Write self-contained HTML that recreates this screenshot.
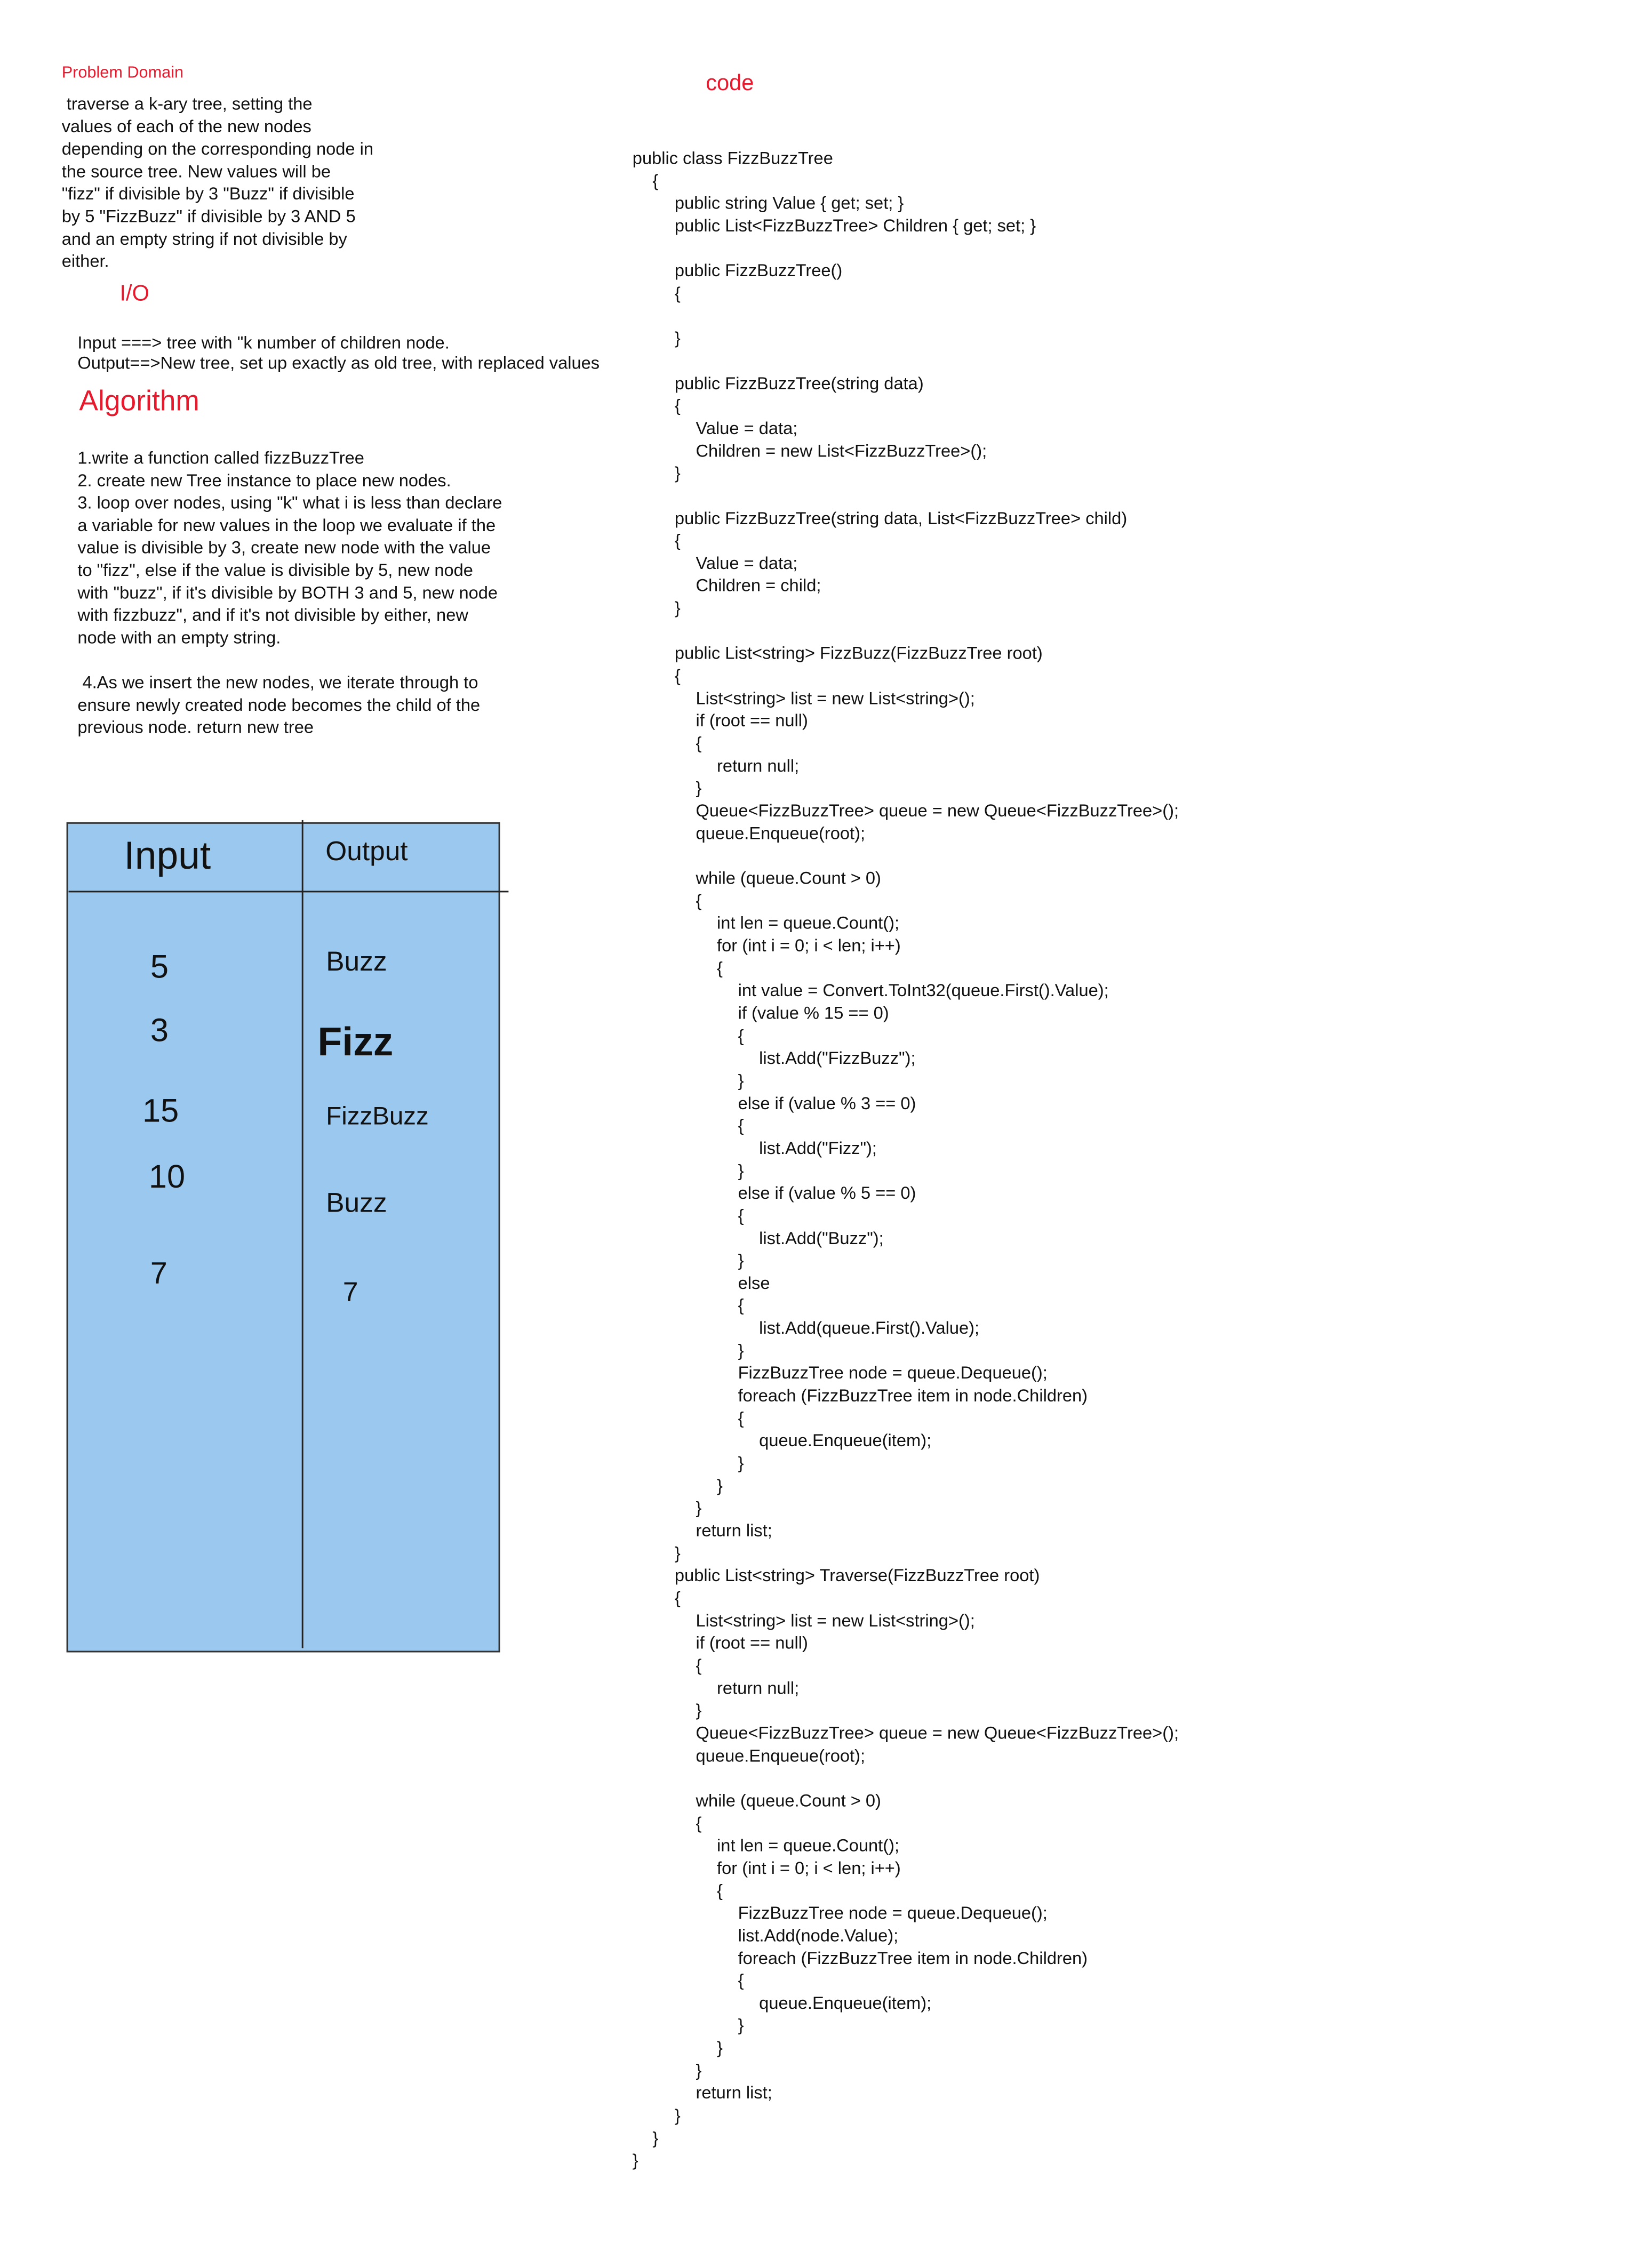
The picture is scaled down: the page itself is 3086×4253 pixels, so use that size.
<!DOCTYPE html>
<html><head><meta charset="utf-8"><style>
body{margin:0;width:3086px;height:4214px;background:#fff;position:relative;overflow:hidden;font-family:"Liberation Sans",sans-serif;color:#111}
#w{position:absolute;left:0;top:0;width:3140px;height:4300px;transform:scale(0.989);transform-origin:0 0}
.t{position:absolute;white-space:pre;line-height:1}
.red{color:#e8192c}
.p{position:absolute;left:117px;font-size:33px;line-height:42.6px;white-space:pre}
.code{position:absolute;left:1199px;top:279px;font-family:"Liberation Sans Narrow","Liberation Sans",sans-serif;font-size:33px;line-height:42.66px}
.code div{height:42.66px;white-space:pre}
</style></head><body><div id="w">
<div class="t red" style="left:117px;top:121px;font-size:31px">Problem Domain</div>
<div class="p" style="top:176px"> traverse a k-ary tree, setting the
values of each of the new nodes
depending on the corresponding node in
the source tree. New values will be
"fizz" if divisible by 3 "Buzz" if divisible
by 5 "FizzBuzz" if divisible by 3 AND 5
and an empty string if not divisible by
either.</div>
<div class="t red" style="left:227px;top:535px;font-size:42px">I/O</div>
<div class="p" style="left:147px;top:631px;line-height:38px;font-size:33px">Input ===&gt; tree with "k number of children node.
Output==&gt;New tree, set up exactly as old tree, with replaced values</div>
<div class="t red" style="left:150px;top:733px;font-size:54px">Algorithm</div>
<div class="p" style="left:147px;top:847px;font-size:33px">1.write a function called fizzBuzzTree
2. create new Tree instance to place new nodes.
3. loop over nodes, using "k" what i is less than declare
a variable for new values in the loop we evaluate if the
value is divisible by 3, create new node with the value
to "fizz", else if the value is divisible by 5, new node
with "buzz", if it's divisible by BOTH 3 and 5, new node
with fizzbuzz", and if it's not divisible by either, new
node with an empty string.

 4.As we insert the new nodes, we iterate through to
ensure newly created node becomes the child of the
previous node. return new tree</div>

<div style="position:absolute;left:126px;top:1559px;width:822px;height:1574px;background:#9ac8ee;border:3px solid #333;box-sizing:border-box"></div>
<div style="position:absolute;left:572px;top:1555px;width:3px;height:1570px;background:#222"></div>
<div style="position:absolute;left:130px;top:1689px;width:834px;height:3px;background:#222"></div>
<div class="t" style="left:235px;top:1585px;font-size:74px">Input</div>
<div class="t" style="left:617px;top:1588px;font-size:52px">Output</div>
<div class="t" style="left:285px;top:1803px;font-size:62px">5</div>
<div class="t" style="left:285px;top:1923px;font-size:62px">3</div>
<div class="t" style="left:270px;top:2076px;font-size:62px">15</div>
<div class="t" style="left:282px;top:2201px;font-size:62px">10</div>
<div class="t" style="left:285px;top:2386px;font-size:58px">7</div>
<div class="t" style="left:618px;top:1797px;font-size:52px">Buzz</div>
<div class="t" style="left:602px;top:1938px;font-size:76px;font-weight:bold">Fizz</div>
<div class="t" style="left:618px;top:2093px;font-size:48px">FizzBuzz</div>
<div class="t" style="left:618px;top:2255px;font-size:52px">Buzz</div>
<div class="t" style="left:650px;top:2424px;font-size:52px">7</div>

<div class="t red" style="left:1338px;top:136px;font-size:42px">code</div>

<div class="code">
<div>public class FizzBuzzTree</div>
<div style="padding-left:38px">{</div>
<div style="padding-left:80px">public string Value { get; set; }</div>
<div style="padding-left:80px">public List&lt;FizzBuzzTree&gt; Children { get; set; }</div>
<div></div>
<div style="padding-left:80px">public FizzBuzzTree()</div>
<div style="padding-left:80px">{</div>
<div></div>
<div style="padding-left:80px">}</div>
<div></div>
<div style="padding-left:80px">public FizzBuzzTree(string data)</div>
<div style="padding-left:80px">{</div>
<div style="padding-left:120px">Value = data;</div>
<div style="padding-left:120px">Children = new List&lt;FizzBuzzTree&gt;();</div>
<div style="padding-left:80px">}</div>
<div></div>
<div style="padding-left:80px">public FizzBuzzTree(string data, List&lt;FizzBuzzTree&gt; child)</div>
<div style="padding-left:80px">{</div>
<div style="padding-left:120px">Value = data;</div>
<div style="padding-left:120px">Children = child;</div>
<div style="padding-left:80px">}</div>
<div></div>
<div style="padding-left:80px">public List&lt;string&gt; FizzBuzz(FizzBuzzTree root)</div>
<div style="padding-left:80px">{</div>
<div style="padding-left:120px">List&lt;string&gt; list = new List&lt;string&gt;();</div>
<div style="padding-left:120px">if (root == null)</div>
<div style="padding-left:120px">{</div>
<div style="padding-left:160px">return null;</div>
<div style="padding-left:120px">}</div>
<div style="padding-left:120px">Queue&lt;FizzBuzzTree&gt; queue = new Queue&lt;FizzBuzzTree&gt;();</div>
<div style="padding-left:120px">queue.Enqueue(root);</div>
<div></div>
<div style="padding-left:120px">while (queue.Count &gt; 0)</div>
<div style="padding-left:120px">{</div>
<div style="padding-left:160px">int len = queue.Count();</div>
<div style="padding-left:160px">for (int i = 0; i &lt; len; i++)</div>
<div style="padding-left:160px">{</div>
<div style="padding-left:200px">int value = Convert.ToInt32(queue.First().Value);</div>
<div style="padding-left:200px">if (value % 15 == 0)</div>
<div style="padding-left:200px">{</div>
<div style="padding-left:240px">list.Add("FizzBuzz");</div>
<div style="padding-left:200px">}</div>
<div style="padding-left:200px">else if (value % 3 == 0)</div>
<div style="padding-left:200px">{</div>
<div style="padding-left:240px">list.Add("Fizz");</div>
<div style="padding-left:200px">}</div>
<div style="padding-left:200px">else if (value % 5 == 0)</div>
<div style="padding-left:200px">{</div>
<div style="padding-left:240px">list.Add("Buzz");</div>
<div style="padding-left:200px">}</div>
<div style="padding-left:200px">else</div>
<div style="padding-left:200px">{</div>
<div style="padding-left:240px">list.Add(queue.First().Value);</div>
<div style="padding-left:200px">}</div>
<div style="padding-left:200px">FizzBuzzTree node = queue.Dequeue();</div>
<div style="padding-left:200px">foreach (FizzBuzzTree item in node.Children)</div>
<div style="padding-left:200px">{</div>
<div style="padding-left:240px">queue.Enqueue(item);</div>
<div style="padding-left:200px">}</div>
<div style="padding-left:160px">}</div>
<div style="padding-left:120px">}</div>
<div style="padding-left:120px">return list;</div>
<div style="padding-left:80px">}</div>
<div style="padding-left:80px">public List&lt;string&gt; Traverse(FizzBuzzTree root)</div>
<div style="padding-left:80px">{</div>
<div style="padding-left:120px">List&lt;string&gt; list = new List&lt;string&gt;();</div>
<div style="padding-left:120px">if (root == null)</div>
<div style="padding-left:120px">{</div>
<div style="padding-left:160px">return null;</div>
<div style="padding-left:120px">}</div>
<div style="padding-left:120px">Queue&lt;FizzBuzzTree&gt; queue = new Queue&lt;FizzBuzzTree&gt;();</div>
<div style="padding-left:120px">queue.Enqueue(root);</div>
<div></div>
<div style="padding-left:120px">while (queue.Count &gt; 0)</div>
<div style="padding-left:120px">{</div>
<div style="padding-left:160px">int len = queue.Count();</div>
<div style="padding-left:160px">for (int i = 0; i &lt; len; i++)</div>
<div style="padding-left:160px">{</div>
<div style="padding-left:200px">FizzBuzzTree node = queue.Dequeue();</div>
<div style="padding-left:200px">list.Add(node.Value);</div>
<div style="padding-left:200px">foreach (FizzBuzzTree item in node.Children)</div>
<div style="padding-left:200px">{</div>
<div style="padding-left:240px">queue.Enqueue(item);</div>
<div style="padding-left:200px">}</div>
<div style="padding-left:160px">}</div>
<div style="padding-left:120px">}</div>
<div style="padding-left:120px">return list;</div>
<div style="padding-left:80px">}</div>
<div style="padding-left:38px">}</div>
<div>}</div>
</div>
</div></body></html>
